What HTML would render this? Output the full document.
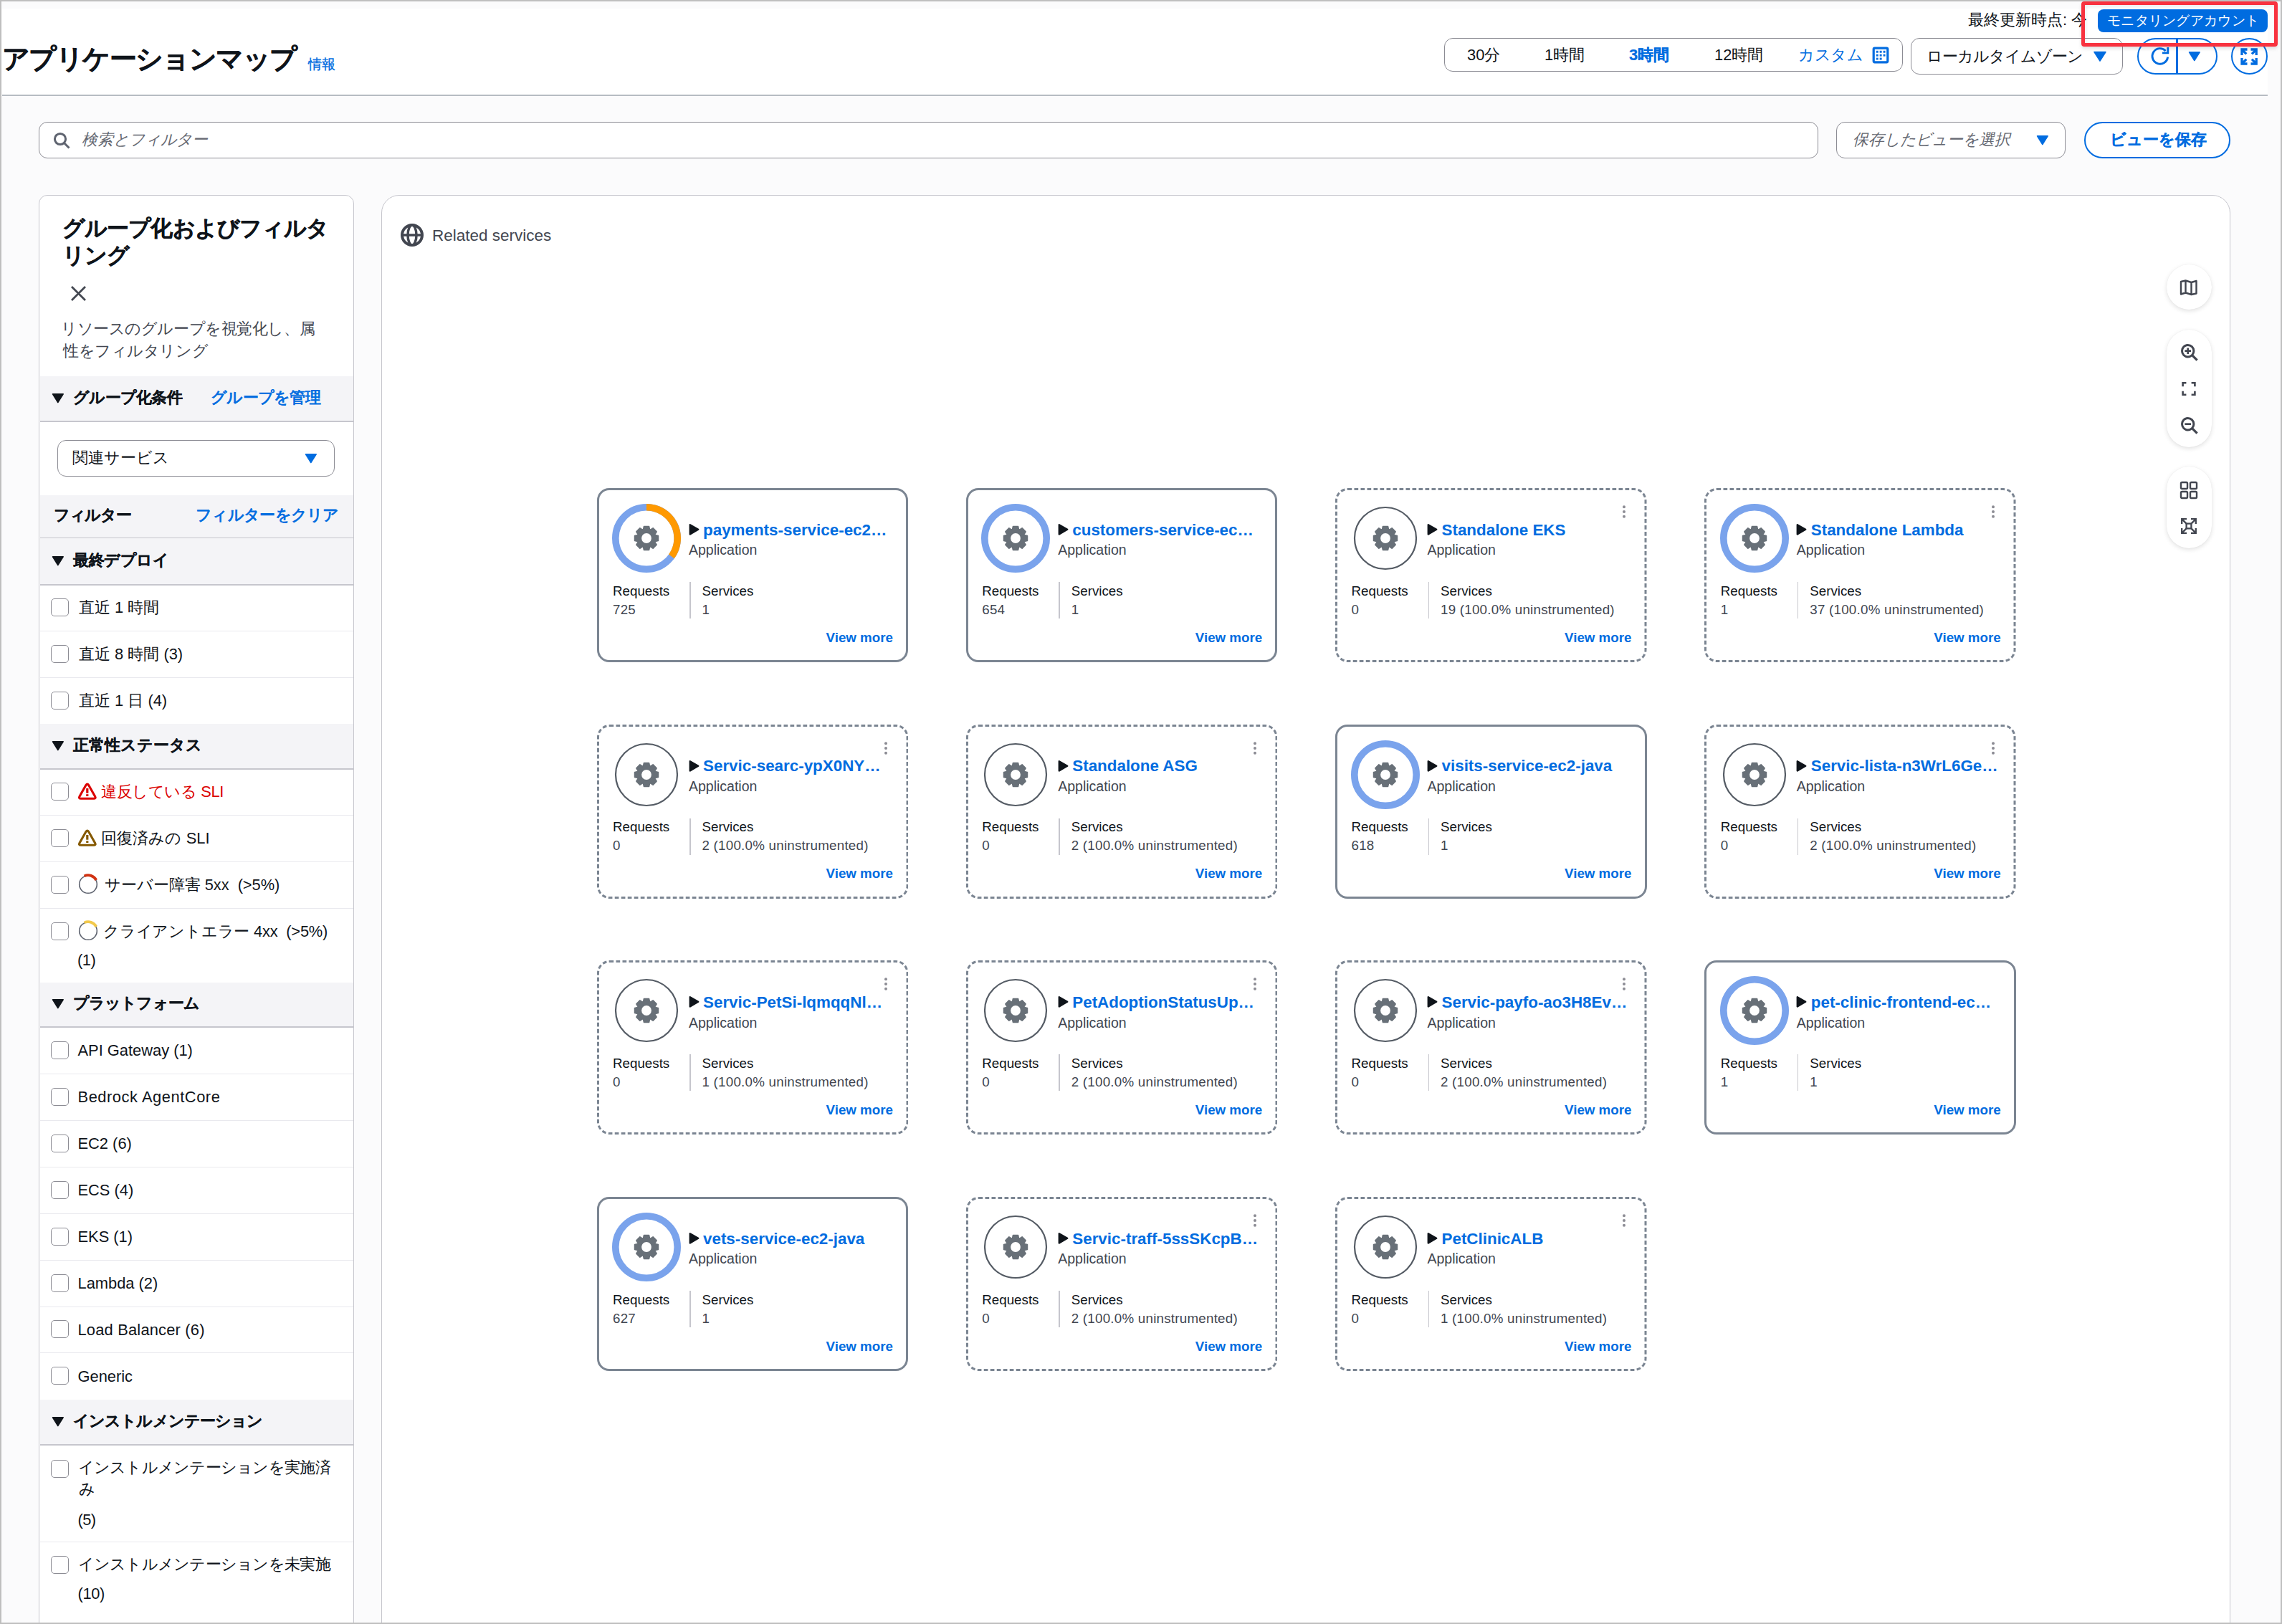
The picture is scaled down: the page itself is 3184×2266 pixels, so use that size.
<!DOCTYPE html>
<html lang="ja"><head><meta charset="utf-8"><title>Application Map</title>
<style>
html,body{margin:0;padding:0;width:3184px;height:2266px;overflow:hidden;background:#fbfbfc;}
body{position:relative;font-family:'Liberation Sans', sans-serif;}
.t{position:absolute;white-space:nowrap;}
.b{position:absolute;}
</style></head><body>
<div class="b" style="left:0px;top:0px;width:3184px;height:2266px;background:#fbfbfc;"></div><div class="b" style="left:3px;top:12px;width:3161px;height:120px;background:#ffffff;"></div><div class="b" style="left:3px;top:132px;width:3161px;height:2px;background:#b6bcc2;"></div><div class="t" style="left:3px;top:59.51px;font-size:37.5px;line-height:45px;color:#0f141a;font-weight:bold;letter-spacing:-1.6px;-webkit-text-stroke:0.38px #0f141a;">アプリケーションマップ</div><div class="t" style="left:430px;top:78.50px;font-size:18.75px;line-height:22px;color:#006ce0;font-weight:normal;letter-spacing:0px;-webkit-text-stroke:0.35px #006ce0;">情報</div><div class="t" style="left:2746px;top:15.42px;font-size:21.875px;line-height:26px;color:#0f141a;font-weight:normal;letter-spacing:0px;">最終更新時点: 今</div><div class="b" style="left:2015px;top:53px;width:640px;height:46.5px;box-sizing:border-box;border:1.5px solid #8c8c94;border-radius:12px;background:#fff;"></div><div class="t" style="left:2047px;top:64.42px;font-size:21.875px;line-height:26px;color:#0f141a;font-weight:normal;letter-spacing:0px;">30分</div><div class="t" style="left:2155px;top:64.42px;font-size:21.875px;line-height:26px;color:#0f141a;font-weight:normal;letter-spacing:0px;">1時間</div><div class="t" style="left:2273px;top:64.42px;font-size:21.875px;line-height:26px;color:#006ce0;font-weight:bold;letter-spacing:0px;-webkit-text-stroke:0.22px #006ce0;">3時間</div><div class="t" style="left:2392px;top:64.42px;font-size:21.875px;line-height:26px;color:#0f141a;font-weight:normal;letter-spacing:0px;">12時間</div><div class="t" style="left:2509px;top:64.42px;font-size:21.875px;line-height:26px;color:#006ce0;font-weight:normal;letter-spacing:-0.3px;">カスタム</div><svg class="b" style="left:2612px;top:65px;" width="24" height="24" viewBox="0 0 24 24"><rect x="2.2" y="2.2" width="19.6" height="19.6" rx="1.5" fill="none" stroke="#006ce0" stroke-width="3.2"/><rect x="5.8" y="5.8" width="2.9" height="2.9" fill="#006ce0"/><rect x="10.7" y="5.8" width="2.9" height="2.9" fill="#006ce0"/><rect x="15.6" y="5.8" width="2.9" height="2.9" fill="#006ce0"/><rect x="5.8" y="10.7" width="2.9" height="2.9" fill="#006ce0"/><rect x="10.7" y="10.7" width="2.9" height="2.9" fill="#006ce0"/><rect x="15.6" y="10.7" width="2.9" height="2.9" fill="#006ce0"/><rect x="5.8" y="15.6" width="2.9" height="2.9" fill="#006ce0"/><rect x="10.7" y="15.6" width="2.9" height="2.9" fill="#006ce0"/></svg><div class="b" style="left:2666px;top:53px;width:296px;height:50.5px;box-sizing:border-box;border:1.5px solid #8c8c94;border-radius:12px;background:#fff;"></div><div class="t" style="left:2688px;top:66.42px;font-size:21.875px;line-height:26px;color:#0f141a;font-weight:normal;letter-spacing:-1.0px;">ローカルタイムゾーン</div><svg class="b" style="left:2921px;top:71px;" width="18" height="16" viewBox="0 0 18 16"><path d="M1 1.5 L17 1.5 L9 14 Z" fill="#006ce0" stroke="#006ce0" stroke-width="1.5" stroke-linejoin="round"/></svg><div class="b" style="left:2982px;top:53px;width:112px;height:51px;box-sizing:border-box;border:2.6px solid #006ce0;border-radius:26px;background:#fff;"></div><div class="b" style="left:3036.3px;top:53px;width:2.8px;height:51px;background:#006ce0;"></div><svg class="b" style="left:2999px;top:64px;" width="30" height="30" viewBox="0 0 30 30"><path d="M25.6 15.5 A10.8 10.8 0 1 1 22.6 6.9" fill="none" stroke="#006ce0" stroke-width="2.9"/><path d="M25.8 2 V9.9 H18" fill="none" stroke="#006ce0" stroke-width="2.9"/></svg><svg class="b" style="left:3053px;top:71px;" width="18" height="16" viewBox="0 0 18 16"><path d="M1.5 1.8 L16.2 1.8 L8.8 13.5 Z" fill="#006ce0" stroke="#006ce0" stroke-width="1.5" stroke-linejoin="round"/></svg><div class="b" style="left:3113px;top:53px;width:51px;height:51px;box-sizing:border-box;border:2.6px solid #006ce0;border-radius:50%;background:#fff;"></div><svg class="b" style="left:3125px;top:66px;" width="26" height="26" viewBox="0 0 26 26"><g fill="none" stroke="#006ce0" stroke-width="3.3"><path d="M3 11 V3 H10.5"/><path d="M15.5 3 H23.2 V11"/><path d="M3 15 V23 H10.5"/><path d="M15.5 23 H23.2 V15"/><path d="M3.5 3.5 L9.3 9.3"/><path d="M22.7 3.5 L16.9 9.3"/><path d="M3.5 22.5 L9.3 16.7"/><path d="M22.7 22.5 L16.9 16.7"/></g></svg><div class="b" style="left:2927px;top:13px;width:237px;height:32px;background:#006ce0;border-radius:8px;"></div><div class="t" style="left:2940px;top:17.50px;font-size:18.75px;line-height:22px;color:#ffffff;font-weight:normal;letter-spacing:0.28px;">モニタリングアカウント</div><div class="b" style="left:2903.5px;top:2px;width:274.5px;height:62.5px;box-sizing:border-box;border:5.8px solid #f8323f;border-radius:4px;box-shadow:0 3px 5px rgba(0,0,0,0.12), inset 2px 2px 4px rgba(0,0,0,0.06);"></div><div class="b" style="left:54px;top:170px;width:2483px;height:51px;box-sizing:border-box;border:1.5px solid #8c8c94;border-radius:12px;background:#fff;"></div><svg class="b" style="left:73px;top:183px;" width="28" height="28" viewBox="0 0 28 28"><circle cx="11" cy="11" r="7.6" fill="none" stroke="#5f6470" stroke-width="3"/><path d="M16.5 16.5 L23.5 23.5" stroke="#5f6470" stroke-width="3"/></svg><div class="t" style="left:114px;top:182.42px;font-size:21.875px;line-height:26px;color:#656871;font-weight:normal;letter-spacing:0px;font-style:italic;">検索とフィルター</div><div class="b" style="left:2562px;top:170px;width:320px;height:51px;box-sizing:border-box;border:1.5px solid #8c8c94;border-radius:12px;background:#fff;"></div><div class="t" style="left:2585px;top:182.42px;font-size:21.875px;line-height:26px;color:#656871;font-weight:normal;letter-spacing:0px;font-style:italic;">保存したビューを選択</div><svg class="b" style="left:2841px;top:188px;" width="18" height="16" viewBox="0 0 18 16"><path d="M1.5 1.8 L16.2 1.8 L8.8 13.5 Z" fill="#006ce0" stroke="#006ce0" stroke-width="1.5" stroke-linejoin="round"/></svg><div class="b" style="left:2908px;top:170px;width:204px;height:51px;box-sizing:border-box;border:2.6px solid #006ce0;border-radius:26px;background:#fff;"></div><div class="t" style="left:2944px;top:182.42px;font-size:21.875px;line-height:26px;color:#006ce0;font-weight:bold;letter-spacing:0px;-webkit-text-stroke:0.22px #006ce0;">ビューを保存</div><div class="b" style="left:54px;top:272px;width:440px;height:2014px;box-sizing:border-box;border:1.5px solid #c6c6cd;border-radius:12px;background:#fff;overflow:hidden;"></div><div class="t" style="left:87px;top:300.17px;font-size:31.25px;line-height:38px;color:#0f141a;font-weight:bold;letter-spacing:-0.9px;-webkit-text-stroke:0.31px #0f141a;">グループ化およびフィルタ</div><div class="t" style="left:87px;top:338.17px;font-size:31.25px;line-height:38px;color:#0f141a;font-weight:bold;letter-spacing:-0.9px;-webkit-text-stroke:0.31px #0f141a;">リング</div><svg class="b" style="left:97px;top:397px;" width="25" height="25" viewBox="0 0 25 25"><path d="M3 3 L22 22 M22 3 L3 22" stroke="#424650" stroke-width="2.8"/></svg><div class="t" style="left:85px;top:446.42px;font-size:21.875px;line-height:26px;color:#424650;font-weight:normal;letter-spacing:-0.43px;">リソースのグループを視覚化し、属</div><div class="t" style="left:88px;top:477.42px;font-size:21.875px;line-height:26px;color:#424650;font-weight:normal;letter-spacing:-0.43px;">性をフィルタリング</div><div class="b" style="left:55.5px;top:525px;width:437px;height:62px;background:#f4f4f7;"></div><div class="b" style="left:55.5px;top:587px;width:437px;height:1.5px;background:#c6c6cd;"></div><svg class="b" style="left:72px;top:547.5px;" width="18" height="16" viewBox="0 0 18 16"><path d="M1.5 1.8 L16.2 1.8 L8.8 13.5 Z" fill="#0f141a" stroke="#0f141a" stroke-width="1.5" stroke-linejoin="round"/></svg><div class="t" style="left:102px;top:541.92px;font-size:21.875px;line-height:26px;color:#0f141a;font-weight:bold;letter-spacing:-0.75px;-webkit-text-stroke:0.22px #0f141a;">グループ化条件</div><div class="t" style="left:294px;top:541.92px;font-size:21.875px;line-height:26px;color:#006ce0;font-weight:normal;letter-spacing:-0.75px;-webkit-text-stroke:0.9px #006ce0;">グループを管理</div><div class="b" style="left:80px;top:614px;width:387px;height:51px;box-sizing:border-box;border:1.5px solid #8c8c94;border-radius:12px;background:#fff;"></div><div class="t" style="left:101px;top:626.42px;font-size:21.875px;line-height:26px;color:#0f141a;font-weight:normal;letter-spacing:0px;">関連サービス</div><svg class="b" style="left:425px;top:632px;" width="18" height="16" viewBox="0 0 18 16"><path d="M1.5 1.8 L16.2 1.8 L8.8 13.5 Z" fill="#006ce0" stroke="#006ce0" stroke-width="1.5" stroke-linejoin="round"/></svg><div class="b" style="left:55.5px;top:691px;width:437px;height:59px;background:#f4f4f7;"></div><div class="b" style="left:55.5px;top:750px;width:437px;height:1.5px;background:#c6c6cd;"></div><div class="t" style="left:75px;top:706.42px;font-size:21.875px;line-height:26px;color:#0f141a;font-weight:bold;letter-spacing:-1.3px;-webkit-text-stroke:0.22px #0f141a;">フィルター</div><div class="t" style="left:273px;top:706.42px;font-size:21.875px;line-height:26px;color:#006ce0;font-weight:normal;letter-spacing:-0.7px;-webkit-text-stroke:0.9px #006ce0;">フィルターをクリア</div><div class="b" style="left:55.5px;top:751px;width:437px;height:64px;background:#f4f4f7;"></div><div class="b" style="left:55.5px;top:815px;width:437px;height:1.5px;background:#c6c6cd;"></div><svg class="b" style="left:72px;top:774.5px;" width="18" height="16" viewBox="0 0 18 16"><path d="M1.5 1.8 L16.2 1.8 L8.8 13.5 Z" fill="#0f141a" stroke="#0f141a" stroke-width="1.5" stroke-linejoin="round"/></svg><div class="t" style="left:102px;top:768.92px;font-size:21.875px;line-height:26px;color:#0f141a;font-weight:bold;letter-spacing:-0.4px;-webkit-text-stroke:0.22px #0f141a;">最終デプロイ</div><div class="b" style="left:71px;top:835px;width:25px;height:25px;box-sizing:border-box;border:1.8px solid #8c8c94;border-radius:5px;background:#fff;"></div><div class="t" style="left:110px;top:835.42px;font-size:21.875px;line-height:26px;color:#0f141a;font-weight:normal;letter-spacing:0px;">直近 1 時間</div><div class="b" style="left:55.5px;top:880px;width:437px;height:1px;background:#e9e9ee;"></div><div class="b" style="left:71px;top:900px;width:25px;height:25px;box-sizing:border-box;border:1.8px solid #8c8c94;border-radius:5px;background:#fff;"></div><div class="t" style="left:110px;top:900.42px;font-size:21.875px;line-height:26px;color:#0f141a;font-weight:normal;letter-spacing:0px;">直近 8 時間 (3)</div><div class="b" style="left:55.5px;top:945px;width:437px;height:1px;background:#e9e9ee;"></div><div class="b" style="left:71px;top:965px;width:25px;height:25px;box-sizing:border-box;border:1.8px solid #8c8c94;border-radius:5px;background:#fff;"></div><div class="t" style="left:110px;top:965.42px;font-size:21.875px;line-height:26px;color:#0f141a;font-weight:normal;letter-spacing:0px;">直近 1 日 (4)</div><div class="b" style="left:55.5px;top:1010px;width:437px;height:62px;background:#f4f4f7;"></div><div class="b" style="left:55.5px;top:1072px;width:437px;height:1.5px;background:#c6c6cd;"></div><svg class="b" style="left:72px;top:1032.5px;" width="18" height="16" viewBox="0 0 18 16"><path d="M1.5 1.8 L16.2 1.8 L8.8 13.5 Z" fill="#0f141a" stroke="#0f141a" stroke-width="1.5" stroke-linejoin="round"/></svg><div class="t" style="left:102px;top:1026.92px;font-size:21.875px;line-height:26px;color:#0f141a;font-weight:bold;letter-spacing:0px;-webkit-text-stroke:0.22px #0f141a;">正常性ステータス</div><div class="b" style="left:71px;top:1092px;width:25px;height:25px;box-sizing:border-box;border:1.8px solid #8c8c94;border-radius:5px;background:#fff;"></div><svg class="b" style="left:108px;top:1091px;" width="28" height="26" viewBox="0 0 28 26"><path d="M11.9 4.6 Q13.8 1.6 15.7 4.6 L24.6 20.2 Q26.2 23.3 22.8 23.3 H4.8 Q1.4 23.3 3 20.2 Z" fill="none" stroke="#db0000" stroke-width="3.1" stroke-linejoin="round"/><rect x="12.2" y="9" width="3.2" height="6.7" fill="#db0000"/><rect x="12.2" y="17.2" width="3.2" height="2.8" fill="#db0000"/></svg><div class="t" style="left:141px;top:1092.42px;font-size:21.875px;line-height:26px;color:#db0000;font-weight:normal;letter-spacing:-0.4px;">違反している SLI</div><div class="b" style="left:55.5px;top:1137px;width:437px;height:1px;background:#e9e9ee;"></div><div class="b" style="left:71px;top:1157px;width:25px;height:25px;box-sizing:border-box;border:1.8px solid #8c8c94;border-radius:5px;background:#fff;"></div><svg class="b" style="left:108px;top:1156px;" width="28" height="26" viewBox="0 0 28 26"><path d="M11.9 4.6 Q13.8 1.6 15.7 4.6 L24.6 20.2 Q26.2 23.3 22.8 23.3 H4.8 Q1.4 23.3 3 20.2 Z" fill="none" stroke="#855900" stroke-width="3.1" stroke-linejoin="round"/><rect x="12.2" y="9" width="3.2" height="6.7" fill="#855900"/><rect x="12.2" y="17.2" width="3.2" height="2.8" fill="#855900"/></svg><div class="t" style="left:141px;top:1157.42px;font-size:21.875px;line-height:26px;color:#0f141a;font-weight:normal;letter-spacing:0.1px;">回復済みの SLI</div><div class="b" style="left:55.5px;top:1202px;width:437px;height:1px;background:#e9e9ee;"></div><div class="b" style="left:71px;top:1222px;width:25px;height:25px;box-sizing:border-box;border:1.8px solid #8c8c94;border-radius:5px;background:#fff;"></div><svg class="b" style="left:108px;top:1218px;" width="30" height="30" viewBox="0 0 30 30"><circle cx="15" cy="16" r="12.3" fill="none" stroke="#5f6470" stroke-width="1.6"/><path d="M9.6 4.4 A12.8 12.8 0 0 1 26.3 10" fill="none" stroke="#d13212" stroke-width="3.8"/></svg><div class="t" style="left:146px;top:1222.42px;font-size:21.875px;line-height:26px;color:#0f141a;font-weight:normal;letter-spacing:-0.05px;">サーバー障害 5xx&nbsp;&nbsp;(&gt;5%)</div><div class="b" style="left:55.5px;top:1267px;width:437px;height:1px;background:#e9e9ee;"></div><div class="b" style="left:71px;top:1287px;width:25px;height:25px;box-sizing:border-box;border:1.8px solid #8c8c94;border-radius:5px;background:#fff;"></div><svg class="b" style="left:108px;top:1283px;" width="30" height="30" viewBox="0 0 30 30"><circle cx="15" cy="16" r="12.3" fill="none" stroke="#5f6470" stroke-width="1.6"/><path d="M9.6 4.4 A12.8 12.8 0 0 1 26.3 10" fill="none" stroke="#f2c94c" stroke-width="3.8"/></svg><div class="t" style="left:144px;top:1287.42px;font-size:21.875px;line-height:26px;color:#0f141a;font-weight:normal;letter-spacing:-0.2px;">クライアントエラー 4xx&nbsp;&nbsp;(&gt;5%)</div><div class="t" style="left:108px;top:1327.42px;font-size:21.875px;line-height:26px;color:#0f141a;font-weight:normal;letter-spacing:-0.5px;">(1)</div><div class="b" style="left:55.5px;top:1371px;width:437px;height:61px;background:#f4f4f7;"></div><div class="b" style="left:55.5px;top:1432px;width:437px;height:1.5px;background:#c6c6cd;"></div><svg class="b" style="left:72px;top:1393.0px;" width="18" height="16" viewBox="0 0 18 16"><path d="M1.5 1.8 L16.2 1.8 L8.8 13.5 Z" fill="#0f141a" stroke="#0f141a" stroke-width="1.5" stroke-linejoin="round"/></svg><div class="t" style="left:102px;top:1387.42px;font-size:21.875px;line-height:26px;color:#0f141a;font-weight:bold;letter-spacing:-0.9px;-webkit-text-stroke:0.22px #0f141a;">プラットフォーム</div><div class="b" style="left:71px;top:1453.0px;width:25px;height:25px;box-sizing:border-box;border:1.8px solid #8c8c94;border-radius:5px;background:#fff;"></div><div class="t" style="left:108.5px;top:1453.42px;font-size:21.875px;line-height:26px;color:#0f141a;font-weight:normal;letter-spacing:0px;">API Gateway (1)</div><div class="b" style="left:55.5px;top:1498.0px;width:437px;height:1px;background:#e9e9ee;"></div><div class="b" style="left:71px;top:1517.9px;width:25px;height:25px;box-sizing:border-box;border:1.8px solid #8c8c94;border-radius:5px;background:#fff;"></div><div class="t" style="left:108.5px;top:1518.32px;font-size:21.875px;line-height:26px;color:#0f141a;font-weight:normal;letter-spacing:0.55px;">Bedrock AgentCore</div><div class="b" style="left:55.5px;top:1562.9px;width:437px;height:1px;background:#e9e9ee;"></div><div class="b" style="left:71px;top:1582.8px;width:25px;height:25px;box-sizing:border-box;border:1.8px solid #8c8c94;border-radius:5px;background:#fff;"></div><div class="t" style="left:108.5px;top:1583.22px;font-size:21.875px;line-height:26px;color:#0f141a;font-weight:normal;letter-spacing:0px;">EC2 (6)</div><div class="b" style="left:55.5px;top:1627.8px;width:437px;height:1px;background:#e9e9ee;"></div><div class="b" style="left:71px;top:1647.7px;width:25px;height:25px;box-sizing:border-box;border:1.8px solid #8c8c94;border-radius:5px;background:#fff;"></div><div class="t" style="left:108.5px;top:1648.12px;font-size:21.875px;line-height:26px;color:#0f141a;font-weight:normal;letter-spacing:0px;">ECS (4)</div><div class="b" style="left:55.5px;top:1692.7px;width:437px;height:1px;background:#e9e9ee;"></div><div class="b" style="left:71px;top:1712.6px;width:25px;height:25px;box-sizing:border-box;border:1.8px solid #8c8c94;border-radius:5px;background:#fff;"></div><div class="t" style="left:108.5px;top:1713.02px;font-size:21.875px;line-height:26px;color:#0f141a;font-weight:normal;letter-spacing:0px;">EKS (1)</div><div class="b" style="left:55.5px;top:1757.6px;width:437px;height:1px;background:#e9e9ee;"></div><div class="b" style="left:71px;top:1777.5px;width:25px;height:25px;box-sizing:border-box;border:1.8px solid #8c8c94;border-radius:5px;background:#fff;"></div><div class="t" style="left:108.5px;top:1777.92px;font-size:21.875px;line-height:26px;color:#0f141a;font-weight:normal;letter-spacing:0px;">Lambda (2)</div><div class="b" style="left:55.5px;top:1822.5px;width:437px;height:1px;background:#e9e9ee;"></div><div class="b" style="left:71px;top:1842.4px;width:25px;height:25px;box-sizing:border-box;border:1.8px solid #8c8c94;border-radius:5px;background:#fff;"></div><div class="t" style="left:108.5px;top:1842.82px;font-size:21.875px;line-height:26px;color:#0f141a;font-weight:normal;letter-spacing:0.2px;">Load Balancer (6)</div><div class="b" style="left:55.5px;top:1887.4px;width:437px;height:1px;background:#e9e9ee;"></div><div class="b" style="left:71px;top:1907.3px;width:25px;height:25px;box-sizing:border-box;border:1.8px solid #8c8c94;border-radius:5px;background:#fff;"></div><div class="t" style="left:108.5px;top:1907.72px;font-size:21.875px;line-height:26px;color:#0f141a;font-weight:normal;letter-spacing:0px;">Generic</div><div class="b" style="left:55.5px;top:1953px;width:437px;height:62px;background:#f4f4f7;"></div><div class="b" style="left:55.5px;top:2015px;width:437px;height:1.5px;background:#c6c6cd;"></div><svg class="b" style="left:72px;top:1975.5px;" width="18" height="16" viewBox="0 0 18 16"><path d="M1.5 1.8 L16.2 1.8 L8.8 13.5 Z" fill="#0f141a" stroke="#0f141a" stroke-width="1.5" stroke-linejoin="round"/></svg><div class="t" style="left:102px;top:1969.92px;font-size:21.875px;line-height:26px;color:#0f141a;font-weight:bold;letter-spacing:-0.9px;-webkit-text-stroke:0.22px #0f141a;">インストルメンテーション</div><div class="b" style="left:71px;top:2037px;width:25px;height:25px;box-sizing:border-box;border:1.8px solid #8c8c94;border-radius:5px;background:#fff;"></div><div class="t" style="left:108.5px;top:2035.42px;font-size:21.875px;line-height:26px;color:#0f141a;font-weight:normal;letter-spacing:-0.73px;">インストルメンテーションを実施済</div><div class="t" style="left:110px;top:2065.42px;font-size:21.875px;line-height:26px;color:#0f141a;font-weight:normal;letter-spacing:-0.9px;">み</div><div class="t" style="left:108.5px;top:2108.42px;font-size:21.875px;line-height:26px;color:#0f141a;font-weight:normal;letter-spacing:-0.6px;">(5)</div><div class="b" style="left:55.5px;top:2151px;width:437px;height:1px;background:#e9e9ee;"></div><div class="b" style="left:71px;top:2171px;width:25px;height:25px;box-sizing:border-box;border:1.8px solid #8c8c94;border-radius:5px;background:#fff;"></div><div class="t" style="left:108.5px;top:2170.42px;font-size:21.875px;line-height:26px;color:#0f141a;font-weight:normal;letter-spacing:-0.73px;">インストルメンテーションを未実施</div><div class="t" style="left:108.5px;top:2211.42px;font-size:21.875px;line-height:26px;color:#0f141a;font-weight:normal;letter-spacing:-0.4px;">(10)</div><div class="b" style="left:532px;top:272px;width:2580px;height:2024px;box-sizing:border-box;border:1.5px solid #c6c6cd;border-radius:25px;background:#fff;"></div><svg class="b" style="left:558px;top:311px;" width="34" height="34" viewBox="0 0 34 34"><circle cx="17" cy="17" r="14" fill="none" stroke="#424650" stroke-width="4"/><ellipse cx="17" cy="17" rx="6" ry="14" fill="none" stroke="#424650" stroke-width="3.5"/><path d="M3 17 H31" stroke="#424650" stroke-width="3.5"/></svg><div class="t" style="left:603px;top:314.70px;font-size:22.5px;line-height:27px;color:#424650;font-weight:normal;letter-spacing:0px;">Related services</div><div class="b" style="left:3023px;top:369px;width:63px;height:63px;border-radius:32px;background:#fff;box-shadow:0 2px 6px rgba(0,0,0,0.12), 0 0 1px rgba(0,0,0,0.08);"></div><div class="b" style="left:3023px;top:460px;width:63px;height:164px;border-radius:32px;background:#fff;box-shadow:0 2px 6px rgba(0,0,0,0.12), 0 0 1px rgba(0,0,0,0.08);"></div><div class="b" style="left:3023px;top:651px;width:63px;height:114px;border-radius:32px;background:#fff;box-shadow:0 2px 6px rgba(0,0,0,0.12), 0 0 1px rgba(0,0,0,0.08);"></div><svg class="b" style="left:3040px;top:389px;" width="28" height="24" viewBox="0 0 28 24"><path d="M3 4 L9.5 2.5 L17.5 5 L24.5 3 V20.5 L17.5 22 L9.5 19.5 L3 21.5 Z M9.5 2.5 V19.5 M17.5 5 V22" fill="none" stroke="#424650" stroke-width="2.4" stroke-linejoin="round"/></svg><svg class="b" style="left:3042px;top:479px;" width="28" height="28" viewBox="0 0 28 28"><circle cx="10.7" cy="10.7" r="8.2" fill="none" stroke="#424650" stroke-width="3"/><path d="M16.6 16.6 L23.6 23.6" stroke="#424650" stroke-width="3.3"/><path d="M10.7 6.4 V15 M6.4 10.7 H15" stroke="#424650" stroke-width="2.7"/></svg><svg class="b" style="left:3043px;top:532px;" width="22" height="22" viewBox="0 0 22 22"><path d="M2.6 7.2 V2.2 H7.4 M14.6 2.2 H19.4 V7.2 M2.6 13.8 V18.8 H7.4 M14.6 18.8 H19.4 V13.8" fill="none" stroke="#424650" stroke-width="2.6"/></svg><svg class="b" style="left:3042px;top:581px;" width="28" height="28" viewBox="0 0 28 28"><circle cx="10.7" cy="10.7" r="8.2" fill="none" stroke="#424650" stroke-width="3"/><path d="M16.6 16.6 L23.6 23.6" stroke="#424650" stroke-width="3.3"/><path d="M6.4 10.7 H15" stroke="#424650" stroke-width="2.7"/></svg><svg class="b" style="left:3041px;top:671px;" width="26" height="26" viewBox="0 0 26 26"><g fill="none" stroke="#424650" stroke-width="2.4"><rect x="2" y="2" width="9" height="9" rx="1.5"/><rect x="15" y="2" width="9" height="9" rx="1.5"/><rect x="2" y="15" width="9" height="9" rx="1.5"/><rect x="15" y="15" width="9" height="9" rx="1.5"/></g></svg><svg class="b" style="left:3041px;top:721px;" width="26" height="26" viewBox="0 0 26 26"><g fill="none" stroke="#424650" stroke-width="2.3"><path d="M3.2 10 V3.2 H10 M16 3.2 H22.8 V10 M3.2 16 V22.8 H10 M16 22.8 H22.8 V16"/><path d="M3.6 3.6 L9.6 9.6 M22.4 3.6 L16.4 9.6 M3.6 22.4 L9.6 16.4 M22.4 22.4 L16.4 16.4"/><rect x="9.6" y="9.6" width="6.8" height="6.8"/></g></svg><div class="b" style="left:832.5px;top:681.0px;width:434.5px;height:243px;box-sizing:border-box;border:3px solid #7b8592;border-radius:17px;background:#fff;"></div><svg class="b" style="left:852.0px;top:701.0px;" width="100" height="100" viewBox="0 0 100 100"><circle cx="50" cy="50" r="43.2" fill="#fff" stroke="#7aa3ec" stroke-width="9.6"/><path d="M50 6.8 A43.2 43.2 0 0 1 84.95 75.39" fill="none" stroke="#ff9900" stroke-width="9.6"/><path d="M45.66 37.74 L46.52 33.67 L53.48 33.67 L54.34 37.74 L55.60 38.27 L59.09 35.99 L64.01 40.91 L61.73 44.40 L62.26 45.66 L66.33 46.52 L66.33 53.48 L62.26 54.34 L61.73 55.60 L64.01 59.09 L59.09 64.01 L55.60 61.73 L54.34 62.26 L53.48 66.33 L46.52 66.33 L45.66 62.26 L44.40 61.73 L40.91 64.01 L35.99 59.09 L38.27 55.60 L37.74 54.34 L33.67 53.48 L33.67 46.52 L37.74 45.66 L38.27 44.40 L35.99 40.91 L40.91 35.99 L44.40 38.27 Z" fill="#687078" stroke="#687078" stroke-width="1.8" stroke-linejoin="round"/><circle cx="50" cy="50" r="6.9" fill="#fff"/></svg><svg class="b" style="left:960.5px;top:730.0px;" width="16" height="18" viewBox="0 0 16 18"><path d="M1.8 2.2 L13.2 8.8 L1.8 15.4 Z" fill="#0f141a" stroke="#0f141a" stroke-width="2.4" stroke-linejoin="round"/></svg><div class="t" style="left:981.0px;top:725.74px;font-size:22.4px;line-height:27px;color:#006ce0;font-weight:bold;letter-spacing:0px;">payments-service-ec2&#8230;</div><div class="t" style="left:961.0px;top:756.24px;font-size:19.5px;line-height:23px;color:#424650;font-weight:normal;letter-spacing:0px;">Application</div><div class="t" style="left:855.0px;top:813.50px;font-size:18.75px;line-height:22px;color:#0f141a;font-weight:normal;letter-spacing:0px;">Requests</div><div class="t" style="left:855.0px;top:839.50px;font-size:18.75px;line-height:22px;color:#424650;font-weight:normal;letter-spacing:0.24px;">725</div><div class="b" style="left:962.0px;top:812.0px;width:1.5px;height:51px;background:#c6c6cd;"></div><div class="t" style="left:979.5px;top:813.50px;font-size:18.75px;line-height:22px;color:#0f141a;font-weight:normal;letter-spacing:0px;">Services</div><div class="t" style="left:979.5px;top:839.50px;font-size:18.75px;line-height:22px;color:#424650;font-weight:normal;letter-spacing:0.24px;">1</div><div class="t" style="left:1152.5px;top:878.50px;font-size:18.75px;line-height:22px;color:#006ce0;font-weight:bold;letter-spacing:0px;">View more</div><div class="b" style="left:1347.75px;top:681.0px;width:434.5px;height:243px;box-sizing:border-box;border:3px solid #7b8592;border-radius:17px;background:#fff;"></div><svg class="b" style="left:1367.25px;top:701.0px;" width="100" height="100" viewBox="0 0 100 100"><circle cx="50" cy="50" r="43.2" fill="#fff" stroke="#7aa3ec" stroke-width="9.6"/><path d="M45.66 37.74 L46.52 33.67 L53.48 33.67 L54.34 37.74 L55.60 38.27 L59.09 35.99 L64.01 40.91 L61.73 44.40 L62.26 45.66 L66.33 46.52 L66.33 53.48 L62.26 54.34 L61.73 55.60 L64.01 59.09 L59.09 64.01 L55.60 61.73 L54.34 62.26 L53.48 66.33 L46.52 66.33 L45.66 62.26 L44.40 61.73 L40.91 64.01 L35.99 59.09 L38.27 55.60 L37.74 54.34 L33.67 53.48 L33.67 46.52 L37.74 45.66 L38.27 44.40 L35.99 40.91 L40.91 35.99 L44.40 38.27 Z" fill="#687078" stroke="#687078" stroke-width="1.8" stroke-linejoin="round"/><circle cx="50" cy="50" r="6.9" fill="#fff"/></svg><svg class="b" style="left:1475.75px;top:730.0px;" width="16" height="18" viewBox="0 0 16 18"><path d="M1.8 2.2 L13.2 8.8 L1.8 15.4 Z" fill="#0f141a" stroke="#0f141a" stroke-width="2.4" stroke-linejoin="round"/></svg><div class="t" style="left:1496.25px;top:725.74px;font-size:22.4px;line-height:27px;color:#006ce0;font-weight:bold;letter-spacing:0px;">customers-service-ec&#8230;</div><div class="t" style="left:1476.25px;top:756.24px;font-size:19.5px;line-height:23px;color:#424650;font-weight:normal;letter-spacing:0px;">Application</div><div class="t" style="left:1370.25px;top:813.50px;font-size:18.75px;line-height:22px;color:#0f141a;font-weight:normal;letter-spacing:0px;">Requests</div><div class="t" style="left:1370.25px;top:839.50px;font-size:18.75px;line-height:22px;color:#424650;font-weight:normal;letter-spacing:0.24px;">654</div><div class="b" style="left:1477.25px;top:812.0px;width:1.5px;height:51px;background:#c6c6cd;"></div><div class="t" style="left:1494.75px;top:813.50px;font-size:18.75px;line-height:22px;color:#0f141a;font-weight:normal;letter-spacing:0px;">Services</div><div class="t" style="left:1494.75px;top:839.50px;font-size:18.75px;line-height:22px;color:#424650;font-weight:normal;letter-spacing:0.24px;">1</div><div class="t" style="left:1667.75px;top:878.50px;font-size:18.75px;line-height:22px;color:#006ce0;font-weight:bold;letter-spacing:0px;">View more</div><svg class="b" style="left:1863.0px;top:681.0px;" width="434.5" height="243" viewBox="0 0 434.5 243"><rect x="1.5" y="1.5" width="431.5" height="240" rx="16" ry="16" fill="#fff" stroke="#7b8592" stroke-width="3" stroke-dasharray="5.7 3.3"/></svg><svg class="b" style="left:2261.0px;top:703.0px;" width="10" height="24" viewBox="0 0 10 24"><circle cx="5" cy="4.3" r="2" fill="#8c8c94"/><circle cx="5" cy="11" r="2" fill="#8c8c94"/><circle cx="5" cy="17.8" r="2" fill="#8c8c94"/></svg><svg class="b" style="left:1882.5px;top:701.0px;" width="100" height="100" viewBox="0 0 100 100"><circle cx="50" cy="50" r="43" fill="#fff" stroke="#545b64" stroke-width="2.2"/><path d="M45.66 37.74 L46.52 33.67 L53.48 33.67 L54.34 37.74 L55.60 38.27 L59.09 35.99 L64.01 40.91 L61.73 44.40 L62.26 45.66 L66.33 46.52 L66.33 53.48 L62.26 54.34 L61.73 55.60 L64.01 59.09 L59.09 64.01 L55.60 61.73 L54.34 62.26 L53.48 66.33 L46.52 66.33 L45.66 62.26 L44.40 61.73 L40.91 64.01 L35.99 59.09 L38.27 55.60 L37.74 54.34 L33.67 53.48 L33.67 46.52 L37.74 45.66 L38.27 44.40 L35.99 40.91 L40.91 35.99 L44.40 38.27 Z" fill="#687078" stroke="#687078" stroke-width="1.8" stroke-linejoin="round"/><circle cx="50" cy="50" r="6.9" fill="#fff"/></svg><svg class="b" style="left:1991.0px;top:730.0px;" width="16" height="18" viewBox="0 0 16 18"><path d="M1.8 2.2 L13.2 8.8 L1.8 15.4 Z" fill="#0f141a" stroke="#0f141a" stroke-width="2.4" stroke-linejoin="round"/></svg><div class="t" style="left:2011.5px;top:725.74px;font-size:22.4px;line-height:27px;color:#006ce0;font-weight:bold;letter-spacing:0px;">Standalone EKS</div><div class="t" style="left:1991.5px;top:756.24px;font-size:19.5px;line-height:23px;color:#424650;font-weight:normal;letter-spacing:0px;">Application</div><div class="t" style="left:1885.5px;top:813.50px;font-size:18.75px;line-height:22px;color:#0f141a;font-weight:normal;letter-spacing:0px;">Requests</div><div class="t" style="left:1885.5px;top:839.50px;font-size:18.75px;line-height:22px;color:#424650;font-weight:normal;letter-spacing:0.24px;">0</div><div class="b" style="left:1992.5px;top:812.0px;width:1.5px;height:51px;background:#c6c6cd;"></div><div class="t" style="left:2010.0px;top:813.50px;font-size:18.75px;line-height:22px;color:#0f141a;font-weight:normal;letter-spacing:0px;">Services</div><div class="t" style="left:2010.0px;top:839.50px;font-size:18.75px;line-height:22px;color:#424650;font-weight:normal;letter-spacing:0.24px;">19 (100.0% uninstrumented)</div><div class="t" style="left:2183.0px;top:878.50px;font-size:18.75px;line-height:22px;color:#006ce0;font-weight:bold;letter-spacing:0px;">View more</div><svg class="b" style="left:2378.25px;top:681.0px;" width="434.5" height="243" viewBox="0 0 434.5 243"><rect x="1.5" y="1.5" width="431.5" height="240" rx="16" ry="16" fill="#fff" stroke="#7b8592" stroke-width="3" stroke-dasharray="5.7 3.3"/></svg><svg class="b" style="left:2776.25px;top:703.0px;" width="10" height="24" viewBox="0 0 10 24"><circle cx="5" cy="4.3" r="2" fill="#8c8c94"/><circle cx="5" cy="11" r="2" fill="#8c8c94"/><circle cx="5" cy="17.8" r="2" fill="#8c8c94"/></svg><svg class="b" style="left:2397.75px;top:701.0px;" width="100" height="100" viewBox="0 0 100 100"><circle cx="50" cy="50" r="43.2" fill="#fff" stroke="#7aa3ec" stroke-width="9.6"/><path d="M45.66 37.74 L46.52 33.67 L53.48 33.67 L54.34 37.74 L55.60 38.27 L59.09 35.99 L64.01 40.91 L61.73 44.40 L62.26 45.66 L66.33 46.52 L66.33 53.48 L62.26 54.34 L61.73 55.60 L64.01 59.09 L59.09 64.01 L55.60 61.73 L54.34 62.26 L53.48 66.33 L46.52 66.33 L45.66 62.26 L44.40 61.73 L40.91 64.01 L35.99 59.09 L38.27 55.60 L37.74 54.34 L33.67 53.48 L33.67 46.52 L37.74 45.66 L38.27 44.40 L35.99 40.91 L40.91 35.99 L44.40 38.27 Z" fill="#687078" stroke="#687078" stroke-width="1.8" stroke-linejoin="round"/><circle cx="50" cy="50" r="6.9" fill="#fff"/></svg><svg class="b" style="left:2506.25px;top:730.0px;" width="16" height="18" viewBox="0 0 16 18"><path d="M1.8 2.2 L13.2 8.8 L1.8 15.4 Z" fill="#0f141a" stroke="#0f141a" stroke-width="2.4" stroke-linejoin="round"/></svg><div class="t" style="left:2526.75px;top:725.74px;font-size:22.4px;line-height:27px;color:#006ce0;font-weight:bold;letter-spacing:0px;">Standalone Lambda</div><div class="t" style="left:2506.75px;top:756.24px;font-size:19.5px;line-height:23px;color:#424650;font-weight:normal;letter-spacing:0px;">Application</div><div class="t" style="left:2400.75px;top:813.50px;font-size:18.75px;line-height:22px;color:#0f141a;font-weight:normal;letter-spacing:0px;">Requests</div><div class="t" style="left:2400.75px;top:839.50px;font-size:18.75px;line-height:22px;color:#424650;font-weight:normal;letter-spacing:0.24px;">1</div><div class="b" style="left:2507.75px;top:812.0px;width:1.5px;height:51px;background:#c6c6cd;"></div><div class="t" style="left:2525.25px;top:813.50px;font-size:18.75px;line-height:22px;color:#0f141a;font-weight:normal;letter-spacing:0px;">Services</div><div class="t" style="left:2525.25px;top:839.50px;font-size:18.75px;line-height:22px;color:#424650;font-weight:normal;letter-spacing:0.24px;">37 (100.0% uninstrumented)</div><div class="t" style="left:2698.25px;top:878.50px;font-size:18.75px;line-height:22px;color:#006ce0;font-weight:bold;letter-spacing:0px;">View more</div><svg class="b" style="left:832.5px;top:1010.7px;" width="434.5" height="243" viewBox="0 0 434.5 243"><rect x="1.5" y="1.5" width="431.5" height="240" rx="16" ry="16" fill="#fff" stroke="#7b8592" stroke-width="3" stroke-dasharray="5.7 3.3"/></svg><svg class="b" style="left:1230.5px;top:1032.7px;" width="10" height="24" viewBox="0 0 10 24"><circle cx="5" cy="4.3" r="2" fill="#8c8c94"/><circle cx="5" cy="11" r="2" fill="#8c8c94"/><circle cx="5" cy="17.8" r="2" fill="#8c8c94"/></svg><svg class="b" style="left:852.0px;top:1030.7px;" width="100" height="100" viewBox="0 0 100 100"><circle cx="50" cy="50" r="43" fill="#fff" stroke="#545b64" stroke-width="2.2"/><path d="M45.66 37.74 L46.52 33.67 L53.48 33.67 L54.34 37.74 L55.60 38.27 L59.09 35.99 L64.01 40.91 L61.73 44.40 L62.26 45.66 L66.33 46.52 L66.33 53.48 L62.26 54.34 L61.73 55.60 L64.01 59.09 L59.09 64.01 L55.60 61.73 L54.34 62.26 L53.48 66.33 L46.52 66.33 L45.66 62.26 L44.40 61.73 L40.91 64.01 L35.99 59.09 L38.27 55.60 L37.74 54.34 L33.67 53.48 L33.67 46.52 L37.74 45.66 L38.27 44.40 L35.99 40.91 L40.91 35.99 L44.40 38.27 Z" fill="#687078" stroke="#687078" stroke-width="1.8" stroke-linejoin="round"/><circle cx="50" cy="50" r="6.9" fill="#fff"/></svg><svg class="b" style="left:960.5px;top:1059.7px;" width="16" height="18" viewBox="0 0 16 18"><path d="M1.8 2.2 L13.2 8.8 L1.8 15.4 Z" fill="#0f141a" stroke="#0f141a" stroke-width="2.4" stroke-linejoin="round"/></svg><div class="t" style="left:981.0px;top:1055.44px;font-size:22.4px;line-height:27px;color:#006ce0;font-weight:bold;letter-spacing:0px;">Servic-searc-ypX0NY&#8230;</div><div class="t" style="left:961.0px;top:1085.94px;font-size:19.5px;line-height:23px;color:#424650;font-weight:normal;letter-spacing:0px;">Application</div><div class="t" style="left:855.0px;top:1143.20px;font-size:18.75px;line-height:22px;color:#0f141a;font-weight:normal;letter-spacing:0px;">Requests</div><div class="t" style="left:855.0px;top:1169.20px;font-size:18.75px;line-height:22px;color:#424650;font-weight:normal;letter-spacing:0.24px;">0</div><div class="b" style="left:962.0px;top:1141.7px;width:1.5px;height:51px;background:#c6c6cd;"></div><div class="t" style="left:979.5px;top:1143.20px;font-size:18.75px;line-height:22px;color:#0f141a;font-weight:normal;letter-spacing:0px;">Services</div><div class="t" style="left:979.5px;top:1169.20px;font-size:18.75px;line-height:22px;color:#424650;font-weight:normal;letter-spacing:0.24px;">2 (100.0% uninstrumented)</div><div class="t" style="left:1152.5px;top:1208.20px;font-size:18.75px;line-height:22px;color:#006ce0;font-weight:bold;letter-spacing:0px;">View more</div><svg class="b" style="left:1347.75px;top:1010.7px;" width="434.5" height="243" viewBox="0 0 434.5 243"><rect x="1.5" y="1.5" width="431.5" height="240" rx="16" ry="16" fill="#fff" stroke="#7b8592" stroke-width="3" stroke-dasharray="5.7 3.3"/></svg><svg class="b" style="left:1745.75px;top:1032.7px;" width="10" height="24" viewBox="0 0 10 24"><circle cx="5" cy="4.3" r="2" fill="#8c8c94"/><circle cx="5" cy="11" r="2" fill="#8c8c94"/><circle cx="5" cy="17.8" r="2" fill="#8c8c94"/></svg><svg class="b" style="left:1367.25px;top:1030.7px;" width="100" height="100" viewBox="0 0 100 100"><circle cx="50" cy="50" r="43" fill="#fff" stroke="#545b64" stroke-width="2.2"/><path d="M45.66 37.74 L46.52 33.67 L53.48 33.67 L54.34 37.74 L55.60 38.27 L59.09 35.99 L64.01 40.91 L61.73 44.40 L62.26 45.66 L66.33 46.52 L66.33 53.48 L62.26 54.34 L61.73 55.60 L64.01 59.09 L59.09 64.01 L55.60 61.73 L54.34 62.26 L53.48 66.33 L46.52 66.33 L45.66 62.26 L44.40 61.73 L40.91 64.01 L35.99 59.09 L38.27 55.60 L37.74 54.34 L33.67 53.48 L33.67 46.52 L37.74 45.66 L38.27 44.40 L35.99 40.91 L40.91 35.99 L44.40 38.27 Z" fill="#687078" stroke="#687078" stroke-width="1.8" stroke-linejoin="round"/><circle cx="50" cy="50" r="6.9" fill="#fff"/></svg><svg class="b" style="left:1475.75px;top:1059.7px;" width="16" height="18" viewBox="0 0 16 18"><path d="M1.8 2.2 L13.2 8.8 L1.8 15.4 Z" fill="#0f141a" stroke="#0f141a" stroke-width="2.4" stroke-linejoin="round"/></svg><div class="t" style="left:1496.25px;top:1055.44px;font-size:22.4px;line-height:27px;color:#006ce0;font-weight:bold;letter-spacing:0px;">Standalone ASG</div><div class="t" style="left:1476.25px;top:1085.94px;font-size:19.5px;line-height:23px;color:#424650;font-weight:normal;letter-spacing:0px;">Application</div><div class="t" style="left:1370.25px;top:1143.20px;font-size:18.75px;line-height:22px;color:#0f141a;font-weight:normal;letter-spacing:0px;">Requests</div><div class="t" style="left:1370.25px;top:1169.20px;font-size:18.75px;line-height:22px;color:#424650;font-weight:normal;letter-spacing:0.24px;">0</div><div class="b" style="left:1477.25px;top:1141.7px;width:1.5px;height:51px;background:#c6c6cd;"></div><div class="t" style="left:1494.75px;top:1143.20px;font-size:18.75px;line-height:22px;color:#0f141a;font-weight:normal;letter-spacing:0px;">Services</div><div class="t" style="left:1494.75px;top:1169.20px;font-size:18.75px;line-height:22px;color:#424650;font-weight:normal;letter-spacing:0.24px;">2 (100.0% uninstrumented)</div><div class="t" style="left:1667.75px;top:1208.20px;font-size:18.75px;line-height:22px;color:#006ce0;font-weight:bold;letter-spacing:0px;">View more</div><div class="b" style="left:1863.0px;top:1010.7px;width:434.5px;height:243px;box-sizing:border-box;border:3px solid #7b8592;border-radius:17px;background:#fff;"></div><svg class="b" style="left:1882.5px;top:1030.7px;" width="100" height="100" viewBox="0 0 100 100"><circle cx="50" cy="50" r="43.2" fill="#fff" stroke="#7aa3ec" stroke-width="9.6"/><path d="M45.66 37.74 L46.52 33.67 L53.48 33.67 L54.34 37.74 L55.60 38.27 L59.09 35.99 L64.01 40.91 L61.73 44.40 L62.26 45.66 L66.33 46.52 L66.33 53.48 L62.26 54.34 L61.73 55.60 L64.01 59.09 L59.09 64.01 L55.60 61.73 L54.34 62.26 L53.48 66.33 L46.52 66.33 L45.66 62.26 L44.40 61.73 L40.91 64.01 L35.99 59.09 L38.27 55.60 L37.74 54.34 L33.67 53.48 L33.67 46.52 L37.74 45.66 L38.27 44.40 L35.99 40.91 L40.91 35.99 L44.40 38.27 Z" fill="#687078" stroke="#687078" stroke-width="1.8" stroke-linejoin="round"/><circle cx="50" cy="50" r="6.9" fill="#fff"/></svg><svg class="b" style="left:1991.0px;top:1059.7px;" width="16" height="18" viewBox="0 0 16 18"><path d="M1.8 2.2 L13.2 8.8 L1.8 15.4 Z" fill="#0f141a" stroke="#0f141a" stroke-width="2.4" stroke-linejoin="round"/></svg><div class="t" style="left:2011.5px;top:1055.44px;font-size:22.4px;line-height:27px;color:#006ce0;font-weight:bold;letter-spacing:0px;">visits-service-ec2-java</div><div class="t" style="left:1991.5px;top:1085.94px;font-size:19.5px;line-height:23px;color:#424650;font-weight:normal;letter-spacing:0px;">Application</div><div class="t" style="left:1885.5px;top:1143.20px;font-size:18.75px;line-height:22px;color:#0f141a;font-weight:normal;letter-spacing:0px;">Requests</div><div class="t" style="left:1885.5px;top:1169.20px;font-size:18.75px;line-height:22px;color:#424650;font-weight:normal;letter-spacing:0.24px;">618</div><div class="b" style="left:1992.5px;top:1141.7px;width:1.5px;height:51px;background:#c6c6cd;"></div><div class="t" style="left:2010.0px;top:1143.20px;font-size:18.75px;line-height:22px;color:#0f141a;font-weight:normal;letter-spacing:0px;">Services</div><div class="t" style="left:2010.0px;top:1169.20px;font-size:18.75px;line-height:22px;color:#424650;font-weight:normal;letter-spacing:0.24px;">1</div><div class="t" style="left:2183.0px;top:1208.20px;font-size:18.75px;line-height:22px;color:#006ce0;font-weight:bold;letter-spacing:0px;">View more</div><svg class="b" style="left:2378.25px;top:1010.7px;" width="434.5" height="243" viewBox="0 0 434.5 243"><rect x="1.5" y="1.5" width="431.5" height="240" rx="16" ry="16" fill="#fff" stroke="#7b8592" stroke-width="3" stroke-dasharray="5.7 3.3"/></svg><svg class="b" style="left:2776.25px;top:1032.7px;" width="10" height="24" viewBox="0 0 10 24"><circle cx="5" cy="4.3" r="2" fill="#8c8c94"/><circle cx="5" cy="11" r="2" fill="#8c8c94"/><circle cx="5" cy="17.8" r="2" fill="#8c8c94"/></svg><svg class="b" style="left:2397.75px;top:1030.7px;" width="100" height="100" viewBox="0 0 100 100"><circle cx="50" cy="50" r="43" fill="#fff" stroke="#545b64" stroke-width="2.2"/><path d="M45.66 37.74 L46.52 33.67 L53.48 33.67 L54.34 37.74 L55.60 38.27 L59.09 35.99 L64.01 40.91 L61.73 44.40 L62.26 45.66 L66.33 46.52 L66.33 53.48 L62.26 54.34 L61.73 55.60 L64.01 59.09 L59.09 64.01 L55.60 61.73 L54.34 62.26 L53.48 66.33 L46.52 66.33 L45.66 62.26 L44.40 61.73 L40.91 64.01 L35.99 59.09 L38.27 55.60 L37.74 54.34 L33.67 53.48 L33.67 46.52 L37.74 45.66 L38.27 44.40 L35.99 40.91 L40.91 35.99 L44.40 38.27 Z" fill="#687078" stroke="#687078" stroke-width="1.8" stroke-linejoin="round"/><circle cx="50" cy="50" r="6.9" fill="#fff"/></svg><svg class="b" style="left:2506.25px;top:1059.7px;" width="16" height="18" viewBox="0 0 16 18"><path d="M1.8 2.2 L13.2 8.8 L1.8 15.4 Z" fill="#0f141a" stroke="#0f141a" stroke-width="2.4" stroke-linejoin="round"/></svg><div class="t" style="left:2526.75px;top:1055.44px;font-size:22.4px;line-height:27px;color:#006ce0;font-weight:bold;letter-spacing:0px;">Servic-lista-n3WrL6Ge&#8230;</div><div class="t" style="left:2506.75px;top:1085.94px;font-size:19.5px;line-height:23px;color:#424650;font-weight:normal;letter-spacing:0px;">Application</div><div class="t" style="left:2400.75px;top:1143.20px;font-size:18.75px;line-height:22px;color:#0f141a;font-weight:normal;letter-spacing:0px;">Requests</div><div class="t" style="left:2400.75px;top:1169.20px;font-size:18.75px;line-height:22px;color:#424650;font-weight:normal;letter-spacing:0.24px;">0</div><div class="b" style="left:2507.75px;top:1141.7px;width:1.5px;height:51px;background:#c6c6cd;"></div><div class="t" style="left:2525.25px;top:1143.20px;font-size:18.75px;line-height:22px;color:#0f141a;font-weight:normal;letter-spacing:0px;">Services</div><div class="t" style="left:2525.25px;top:1169.20px;font-size:18.75px;line-height:22px;color:#424650;font-weight:normal;letter-spacing:0.24px;">2 (100.0% uninstrumented)</div><div class="t" style="left:2698.25px;top:1208.20px;font-size:18.75px;line-height:22px;color:#006ce0;font-weight:bold;letter-spacing:0px;">View more</div><svg class="b" style="left:832.5px;top:1340.4px;" width="434.5" height="243" viewBox="0 0 434.5 243"><rect x="1.5" y="1.5" width="431.5" height="240" rx="16" ry="16" fill="#fff" stroke="#7b8592" stroke-width="3" stroke-dasharray="5.7 3.3"/></svg><svg class="b" style="left:1230.5px;top:1362.4px;" width="10" height="24" viewBox="0 0 10 24"><circle cx="5" cy="4.3" r="2" fill="#8c8c94"/><circle cx="5" cy="11" r="2" fill="#8c8c94"/><circle cx="5" cy="17.8" r="2" fill="#8c8c94"/></svg><svg class="b" style="left:852.0px;top:1360.4px;" width="100" height="100" viewBox="0 0 100 100"><circle cx="50" cy="50" r="43" fill="#fff" stroke="#545b64" stroke-width="2.2"/><path d="M45.66 37.74 L46.52 33.67 L53.48 33.67 L54.34 37.74 L55.60 38.27 L59.09 35.99 L64.01 40.91 L61.73 44.40 L62.26 45.66 L66.33 46.52 L66.33 53.48 L62.26 54.34 L61.73 55.60 L64.01 59.09 L59.09 64.01 L55.60 61.73 L54.34 62.26 L53.48 66.33 L46.52 66.33 L45.66 62.26 L44.40 61.73 L40.91 64.01 L35.99 59.09 L38.27 55.60 L37.74 54.34 L33.67 53.48 L33.67 46.52 L37.74 45.66 L38.27 44.40 L35.99 40.91 L40.91 35.99 L44.40 38.27 Z" fill="#687078" stroke="#687078" stroke-width="1.8" stroke-linejoin="round"/><circle cx="50" cy="50" r="6.9" fill="#fff"/></svg><svg class="b" style="left:960.5px;top:1389.4px;" width="16" height="18" viewBox="0 0 16 18"><path d="M1.8 2.2 L13.2 8.8 L1.8 15.4 Z" fill="#0f141a" stroke="#0f141a" stroke-width="2.4" stroke-linejoin="round"/></svg><div class="t" style="left:981.0px;top:1385.14px;font-size:22.4px;line-height:27px;color:#006ce0;font-weight:bold;letter-spacing:0px;">Servic-PetSi-lqmqqNl&#8230;</div><div class="t" style="left:961.0px;top:1415.64px;font-size:19.5px;line-height:23px;color:#424650;font-weight:normal;letter-spacing:0px;">Application</div><div class="t" style="left:855.0px;top:1472.90px;font-size:18.75px;line-height:22px;color:#0f141a;font-weight:normal;letter-spacing:0px;">Requests</div><div class="t" style="left:855.0px;top:1498.90px;font-size:18.75px;line-height:22px;color:#424650;font-weight:normal;letter-spacing:0.24px;">0</div><div class="b" style="left:962.0px;top:1471.4px;width:1.5px;height:51px;background:#c6c6cd;"></div><div class="t" style="left:979.5px;top:1472.90px;font-size:18.75px;line-height:22px;color:#0f141a;font-weight:normal;letter-spacing:0px;">Services</div><div class="t" style="left:979.5px;top:1498.90px;font-size:18.75px;line-height:22px;color:#424650;font-weight:normal;letter-spacing:0.24px;">1 (100.0% uninstrumented)</div><div class="t" style="left:1152.5px;top:1537.90px;font-size:18.75px;line-height:22px;color:#006ce0;font-weight:bold;letter-spacing:0px;">View more</div><svg class="b" style="left:1347.75px;top:1340.4px;" width="434.5" height="243" viewBox="0 0 434.5 243"><rect x="1.5" y="1.5" width="431.5" height="240" rx="16" ry="16" fill="#fff" stroke="#7b8592" stroke-width="3" stroke-dasharray="5.7 3.3"/></svg><svg class="b" style="left:1745.75px;top:1362.4px;" width="10" height="24" viewBox="0 0 10 24"><circle cx="5" cy="4.3" r="2" fill="#8c8c94"/><circle cx="5" cy="11" r="2" fill="#8c8c94"/><circle cx="5" cy="17.8" r="2" fill="#8c8c94"/></svg><svg class="b" style="left:1367.25px;top:1360.4px;" width="100" height="100" viewBox="0 0 100 100"><circle cx="50" cy="50" r="43" fill="#fff" stroke="#545b64" stroke-width="2.2"/><path d="M45.66 37.74 L46.52 33.67 L53.48 33.67 L54.34 37.74 L55.60 38.27 L59.09 35.99 L64.01 40.91 L61.73 44.40 L62.26 45.66 L66.33 46.52 L66.33 53.48 L62.26 54.34 L61.73 55.60 L64.01 59.09 L59.09 64.01 L55.60 61.73 L54.34 62.26 L53.48 66.33 L46.52 66.33 L45.66 62.26 L44.40 61.73 L40.91 64.01 L35.99 59.09 L38.27 55.60 L37.74 54.34 L33.67 53.48 L33.67 46.52 L37.74 45.66 L38.27 44.40 L35.99 40.91 L40.91 35.99 L44.40 38.27 Z" fill="#687078" stroke="#687078" stroke-width="1.8" stroke-linejoin="round"/><circle cx="50" cy="50" r="6.9" fill="#fff"/></svg><svg class="b" style="left:1475.75px;top:1389.4px;" width="16" height="18" viewBox="0 0 16 18"><path d="M1.8 2.2 L13.2 8.8 L1.8 15.4 Z" fill="#0f141a" stroke="#0f141a" stroke-width="2.4" stroke-linejoin="round"/></svg><div class="t" style="left:1496.25px;top:1385.14px;font-size:22.4px;line-height:27px;color:#006ce0;font-weight:bold;letter-spacing:0px;">PetAdoptionStatusUp&#8230;</div><div class="t" style="left:1476.25px;top:1415.64px;font-size:19.5px;line-height:23px;color:#424650;font-weight:normal;letter-spacing:0px;">Application</div><div class="t" style="left:1370.25px;top:1472.90px;font-size:18.75px;line-height:22px;color:#0f141a;font-weight:normal;letter-spacing:0px;">Requests</div><div class="t" style="left:1370.25px;top:1498.90px;font-size:18.75px;line-height:22px;color:#424650;font-weight:normal;letter-spacing:0.24px;">0</div><div class="b" style="left:1477.25px;top:1471.4px;width:1.5px;height:51px;background:#c6c6cd;"></div><div class="t" style="left:1494.75px;top:1472.90px;font-size:18.75px;line-height:22px;color:#0f141a;font-weight:normal;letter-spacing:0px;">Services</div><div class="t" style="left:1494.75px;top:1498.90px;font-size:18.75px;line-height:22px;color:#424650;font-weight:normal;letter-spacing:0.24px;">2 (100.0% uninstrumented)</div><div class="t" style="left:1667.75px;top:1537.90px;font-size:18.75px;line-height:22px;color:#006ce0;font-weight:bold;letter-spacing:0px;">View more</div><svg class="b" style="left:1863.0px;top:1340.4px;" width="434.5" height="243" viewBox="0 0 434.5 243"><rect x="1.5" y="1.5" width="431.5" height="240" rx="16" ry="16" fill="#fff" stroke="#7b8592" stroke-width="3" stroke-dasharray="5.7 3.3"/></svg><svg class="b" style="left:2261.0px;top:1362.4px;" width="10" height="24" viewBox="0 0 10 24"><circle cx="5" cy="4.3" r="2" fill="#8c8c94"/><circle cx="5" cy="11" r="2" fill="#8c8c94"/><circle cx="5" cy="17.8" r="2" fill="#8c8c94"/></svg><svg class="b" style="left:1882.5px;top:1360.4px;" width="100" height="100" viewBox="0 0 100 100"><circle cx="50" cy="50" r="43" fill="#fff" stroke="#545b64" stroke-width="2.2"/><path d="M45.66 37.74 L46.52 33.67 L53.48 33.67 L54.34 37.74 L55.60 38.27 L59.09 35.99 L64.01 40.91 L61.73 44.40 L62.26 45.66 L66.33 46.52 L66.33 53.48 L62.26 54.34 L61.73 55.60 L64.01 59.09 L59.09 64.01 L55.60 61.73 L54.34 62.26 L53.48 66.33 L46.52 66.33 L45.66 62.26 L44.40 61.73 L40.91 64.01 L35.99 59.09 L38.27 55.60 L37.74 54.34 L33.67 53.48 L33.67 46.52 L37.74 45.66 L38.27 44.40 L35.99 40.91 L40.91 35.99 L44.40 38.27 Z" fill="#687078" stroke="#687078" stroke-width="1.8" stroke-linejoin="round"/><circle cx="50" cy="50" r="6.9" fill="#fff"/></svg><svg class="b" style="left:1991.0px;top:1389.4px;" width="16" height="18" viewBox="0 0 16 18"><path d="M1.8 2.2 L13.2 8.8 L1.8 15.4 Z" fill="#0f141a" stroke="#0f141a" stroke-width="2.4" stroke-linejoin="round"/></svg><div class="t" style="left:2011.5px;top:1385.14px;font-size:22.4px;line-height:27px;color:#006ce0;font-weight:bold;letter-spacing:0px;">Servic-payfo-ao3H8Ev&#8230;</div><div class="t" style="left:1991.5px;top:1415.64px;font-size:19.5px;line-height:23px;color:#424650;font-weight:normal;letter-spacing:0px;">Application</div><div class="t" style="left:1885.5px;top:1472.90px;font-size:18.75px;line-height:22px;color:#0f141a;font-weight:normal;letter-spacing:0px;">Requests</div><div class="t" style="left:1885.5px;top:1498.90px;font-size:18.75px;line-height:22px;color:#424650;font-weight:normal;letter-spacing:0.24px;">0</div><div class="b" style="left:1992.5px;top:1471.4px;width:1.5px;height:51px;background:#c6c6cd;"></div><div class="t" style="left:2010.0px;top:1472.90px;font-size:18.75px;line-height:22px;color:#0f141a;font-weight:normal;letter-spacing:0px;">Services</div><div class="t" style="left:2010.0px;top:1498.90px;font-size:18.75px;line-height:22px;color:#424650;font-weight:normal;letter-spacing:0.24px;">2 (100.0% uninstrumented)</div><div class="t" style="left:2183.0px;top:1537.90px;font-size:18.75px;line-height:22px;color:#006ce0;font-weight:bold;letter-spacing:0px;">View more</div><div class="b" style="left:2378.25px;top:1340.4px;width:434.5px;height:243px;box-sizing:border-box;border:3px solid #7b8592;border-radius:17px;background:#fff;"></div><svg class="b" style="left:2397.75px;top:1360.4px;" width="100" height="100" viewBox="0 0 100 100"><circle cx="50" cy="50" r="43.2" fill="#fff" stroke="#7aa3ec" stroke-width="9.6"/><path d="M45.66 37.74 L46.52 33.67 L53.48 33.67 L54.34 37.74 L55.60 38.27 L59.09 35.99 L64.01 40.91 L61.73 44.40 L62.26 45.66 L66.33 46.52 L66.33 53.48 L62.26 54.34 L61.73 55.60 L64.01 59.09 L59.09 64.01 L55.60 61.73 L54.34 62.26 L53.48 66.33 L46.52 66.33 L45.66 62.26 L44.40 61.73 L40.91 64.01 L35.99 59.09 L38.27 55.60 L37.74 54.34 L33.67 53.48 L33.67 46.52 L37.74 45.66 L38.27 44.40 L35.99 40.91 L40.91 35.99 L44.40 38.27 Z" fill="#687078" stroke="#687078" stroke-width="1.8" stroke-linejoin="round"/><circle cx="50" cy="50" r="6.9" fill="#fff"/></svg><svg class="b" style="left:2506.25px;top:1389.4px;" width="16" height="18" viewBox="0 0 16 18"><path d="M1.8 2.2 L13.2 8.8 L1.8 15.4 Z" fill="#0f141a" stroke="#0f141a" stroke-width="2.4" stroke-linejoin="round"/></svg><div class="t" style="left:2526.75px;top:1385.14px;font-size:22.4px;line-height:27px;color:#006ce0;font-weight:bold;letter-spacing:0px;">pet-clinic-frontend-ec&#8230;</div><div class="t" style="left:2506.75px;top:1415.64px;font-size:19.5px;line-height:23px;color:#424650;font-weight:normal;letter-spacing:0px;">Application</div><div class="t" style="left:2400.75px;top:1472.90px;font-size:18.75px;line-height:22px;color:#0f141a;font-weight:normal;letter-spacing:0px;">Requests</div><div class="t" style="left:2400.75px;top:1498.90px;font-size:18.75px;line-height:22px;color:#424650;font-weight:normal;letter-spacing:0.24px;">1</div><div class="b" style="left:2507.75px;top:1471.4px;width:1.5px;height:51px;background:#c6c6cd;"></div><div class="t" style="left:2525.25px;top:1472.90px;font-size:18.75px;line-height:22px;color:#0f141a;font-weight:normal;letter-spacing:0px;">Services</div><div class="t" style="left:2525.25px;top:1498.90px;font-size:18.75px;line-height:22px;color:#424650;font-weight:normal;letter-spacing:0.24px;">1</div><div class="t" style="left:2698.25px;top:1537.90px;font-size:18.75px;line-height:22px;color:#006ce0;font-weight:bold;letter-spacing:0px;">View more</div><div class="b" style="left:832.5px;top:1670.1px;width:434.5px;height:243px;box-sizing:border-box;border:3px solid #7b8592;border-radius:17px;background:#fff;"></div><svg class="b" style="left:852.0px;top:1690.1px;" width="100" height="100" viewBox="0 0 100 100"><circle cx="50" cy="50" r="43.2" fill="#fff" stroke="#7aa3ec" stroke-width="9.6"/><path d="M45.66 37.74 L46.52 33.67 L53.48 33.67 L54.34 37.74 L55.60 38.27 L59.09 35.99 L64.01 40.91 L61.73 44.40 L62.26 45.66 L66.33 46.52 L66.33 53.48 L62.26 54.34 L61.73 55.60 L64.01 59.09 L59.09 64.01 L55.60 61.73 L54.34 62.26 L53.48 66.33 L46.52 66.33 L45.66 62.26 L44.40 61.73 L40.91 64.01 L35.99 59.09 L38.27 55.60 L37.74 54.34 L33.67 53.48 L33.67 46.52 L37.74 45.66 L38.27 44.40 L35.99 40.91 L40.91 35.99 L44.40 38.27 Z" fill="#687078" stroke="#687078" stroke-width="1.8" stroke-linejoin="round"/><circle cx="50" cy="50" r="6.9" fill="#fff"/></svg><svg class="b" style="left:960.5px;top:1719.1px;" width="16" height="18" viewBox="0 0 16 18"><path d="M1.8 2.2 L13.2 8.8 L1.8 15.4 Z" fill="#0f141a" stroke="#0f141a" stroke-width="2.4" stroke-linejoin="round"/></svg><div class="t" style="left:981.0px;top:1714.84px;font-size:22.4px;line-height:27px;color:#006ce0;font-weight:bold;letter-spacing:0px;">vets-service-ec2-java</div><div class="t" style="left:961.0px;top:1745.34px;font-size:19.5px;line-height:23px;color:#424650;font-weight:normal;letter-spacing:0px;">Application</div><div class="t" style="left:855.0px;top:1802.60px;font-size:18.75px;line-height:22px;color:#0f141a;font-weight:normal;letter-spacing:0px;">Requests</div><div class="t" style="left:855.0px;top:1828.60px;font-size:18.75px;line-height:22px;color:#424650;font-weight:normal;letter-spacing:0.24px;">627</div><div class="b" style="left:962.0px;top:1801.1px;width:1.5px;height:51px;background:#c6c6cd;"></div><div class="t" style="left:979.5px;top:1802.60px;font-size:18.75px;line-height:22px;color:#0f141a;font-weight:normal;letter-spacing:0px;">Services</div><div class="t" style="left:979.5px;top:1828.60px;font-size:18.75px;line-height:22px;color:#424650;font-weight:normal;letter-spacing:0.24px;">1</div><div class="t" style="left:1152.5px;top:1867.60px;font-size:18.75px;line-height:22px;color:#006ce0;font-weight:bold;letter-spacing:0px;">View more</div><svg class="b" style="left:1347.75px;top:1670.1px;" width="434.5" height="243" viewBox="0 0 434.5 243"><rect x="1.5" y="1.5" width="431.5" height="240" rx="16" ry="16" fill="#fff" stroke="#7b8592" stroke-width="3" stroke-dasharray="5.7 3.3"/></svg><svg class="b" style="left:1745.75px;top:1692.1px;" width="10" height="24" viewBox="0 0 10 24"><circle cx="5" cy="4.3" r="2" fill="#8c8c94"/><circle cx="5" cy="11" r="2" fill="#8c8c94"/><circle cx="5" cy="17.8" r="2" fill="#8c8c94"/></svg><svg class="b" style="left:1367.25px;top:1690.1px;" width="100" height="100" viewBox="0 0 100 100"><circle cx="50" cy="50" r="43" fill="#fff" stroke="#545b64" stroke-width="2.2"/><path d="M45.66 37.74 L46.52 33.67 L53.48 33.67 L54.34 37.74 L55.60 38.27 L59.09 35.99 L64.01 40.91 L61.73 44.40 L62.26 45.66 L66.33 46.52 L66.33 53.48 L62.26 54.34 L61.73 55.60 L64.01 59.09 L59.09 64.01 L55.60 61.73 L54.34 62.26 L53.48 66.33 L46.52 66.33 L45.66 62.26 L44.40 61.73 L40.91 64.01 L35.99 59.09 L38.27 55.60 L37.74 54.34 L33.67 53.48 L33.67 46.52 L37.74 45.66 L38.27 44.40 L35.99 40.91 L40.91 35.99 L44.40 38.27 Z" fill="#687078" stroke="#687078" stroke-width="1.8" stroke-linejoin="round"/><circle cx="50" cy="50" r="6.9" fill="#fff"/></svg><svg class="b" style="left:1475.75px;top:1719.1px;" width="16" height="18" viewBox="0 0 16 18"><path d="M1.8 2.2 L13.2 8.8 L1.8 15.4 Z" fill="#0f141a" stroke="#0f141a" stroke-width="2.4" stroke-linejoin="round"/></svg><div class="t" style="left:1496.25px;top:1714.84px;font-size:22.4px;line-height:27px;color:#006ce0;font-weight:bold;letter-spacing:0px;">Servic-traff-5ssSKcpB&#8230;</div><div class="t" style="left:1476.25px;top:1745.34px;font-size:19.5px;line-height:23px;color:#424650;font-weight:normal;letter-spacing:0px;">Application</div><div class="t" style="left:1370.25px;top:1802.60px;font-size:18.75px;line-height:22px;color:#0f141a;font-weight:normal;letter-spacing:0px;">Requests</div><div class="t" style="left:1370.25px;top:1828.60px;font-size:18.75px;line-height:22px;color:#424650;font-weight:normal;letter-spacing:0.24px;">0</div><div class="b" style="left:1477.25px;top:1801.1px;width:1.5px;height:51px;background:#c6c6cd;"></div><div class="t" style="left:1494.75px;top:1802.60px;font-size:18.75px;line-height:22px;color:#0f141a;font-weight:normal;letter-spacing:0px;">Services</div><div class="t" style="left:1494.75px;top:1828.60px;font-size:18.75px;line-height:22px;color:#424650;font-weight:normal;letter-spacing:0.24px;">2 (100.0% uninstrumented)</div><div class="t" style="left:1667.75px;top:1867.60px;font-size:18.75px;line-height:22px;color:#006ce0;font-weight:bold;letter-spacing:0px;">View more</div><svg class="b" style="left:1863.0px;top:1670.1px;" width="434.5" height="243" viewBox="0 0 434.5 243"><rect x="1.5" y="1.5" width="431.5" height="240" rx="16" ry="16" fill="#fff" stroke="#7b8592" stroke-width="3" stroke-dasharray="5.7 3.3"/></svg><svg class="b" style="left:2261.0px;top:1692.1px;" width="10" height="24" viewBox="0 0 10 24"><circle cx="5" cy="4.3" r="2" fill="#8c8c94"/><circle cx="5" cy="11" r="2" fill="#8c8c94"/><circle cx="5" cy="17.8" r="2" fill="#8c8c94"/></svg><svg class="b" style="left:1882.5px;top:1690.1px;" width="100" height="100" viewBox="0 0 100 100"><circle cx="50" cy="50" r="43" fill="#fff" stroke="#545b64" stroke-width="2.2"/><path d="M45.66 37.74 L46.52 33.67 L53.48 33.67 L54.34 37.74 L55.60 38.27 L59.09 35.99 L64.01 40.91 L61.73 44.40 L62.26 45.66 L66.33 46.52 L66.33 53.48 L62.26 54.34 L61.73 55.60 L64.01 59.09 L59.09 64.01 L55.60 61.73 L54.34 62.26 L53.48 66.33 L46.52 66.33 L45.66 62.26 L44.40 61.73 L40.91 64.01 L35.99 59.09 L38.27 55.60 L37.74 54.34 L33.67 53.48 L33.67 46.52 L37.74 45.66 L38.27 44.40 L35.99 40.91 L40.91 35.99 L44.40 38.27 Z" fill="#687078" stroke="#687078" stroke-width="1.8" stroke-linejoin="round"/><circle cx="50" cy="50" r="6.9" fill="#fff"/></svg><svg class="b" style="left:1991.0px;top:1719.1px;" width="16" height="18" viewBox="0 0 16 18"><path d="M1.8 2.2 L13.2 8.8 L1.8 15.4 Z" fill="#0f141a" stroke="#0f141a" stroke-width="2.4" stroke-linejoin="round"/></svg><div class="t" style="left:2011.5px;top:1714.84px;font-size:22.4px;line-height:27px;color:#006ce0;font-weight:bold;letter-spacing:0px;">PetClinicALB</div><div class="t" style="left:1991.5px;top:1745.34px;font-size:19.5px;line-height:23px;color:#424650;font-weight:normal;letter-spacing:0px;">Application</div><div class="t" style="left:1885.5px;top:1802.60px;font-size:18.75px;line-height:22px;color:#0f141a;font-weight:normal;letter-spacing:0px;">Requests</div><div class="t" style="left:1885.5px;top:1828.60px;font-size:18.75px;line-height:22px;color:#424650;font-weight:normal;letter-spacing:0.24px;">0</div><div class="b" style="left:1992.5px;top:1801.1px;width:1.5px;height:51px;background:#c6c6cd;"></div><div class="t" style="left:2010.0px;top:1802.60px;font-size:18.75px;line-height:22px;color:#0f141a;font-weight:normal;letter-spacing:0px;">Services</div><div class="t" style="left:2010.0px;top:1828.60px;font-size:18.75px;line-height:22px;color:#424650;font-weight:normal;letter-spacing:0.24px;">1 (100.0% uninstrumented)</div><div class="t" style="left:2183.0px;top:1867.60px;font-size:18.75px;line-height:22px;color:#006ce0;font-weight:bold;letter-spacing:0px;">View more</div><div class="b" style="left:0px;top:0px;width:3184px;height:2px;background:#bfbfbf;"></div><div class="b" style="left:0px;top:0px;width:2px;height:2266px;background:#bfbfbf;"></div><div class="b" style="left:3182px;top:0px;width:2px;height:2266px;background:#bfbfbf;"></div><div class="b" style="left:0px;top:2264px;width:3184px;height:2px;background:#bfbfbf;"></div>
</body></html>
